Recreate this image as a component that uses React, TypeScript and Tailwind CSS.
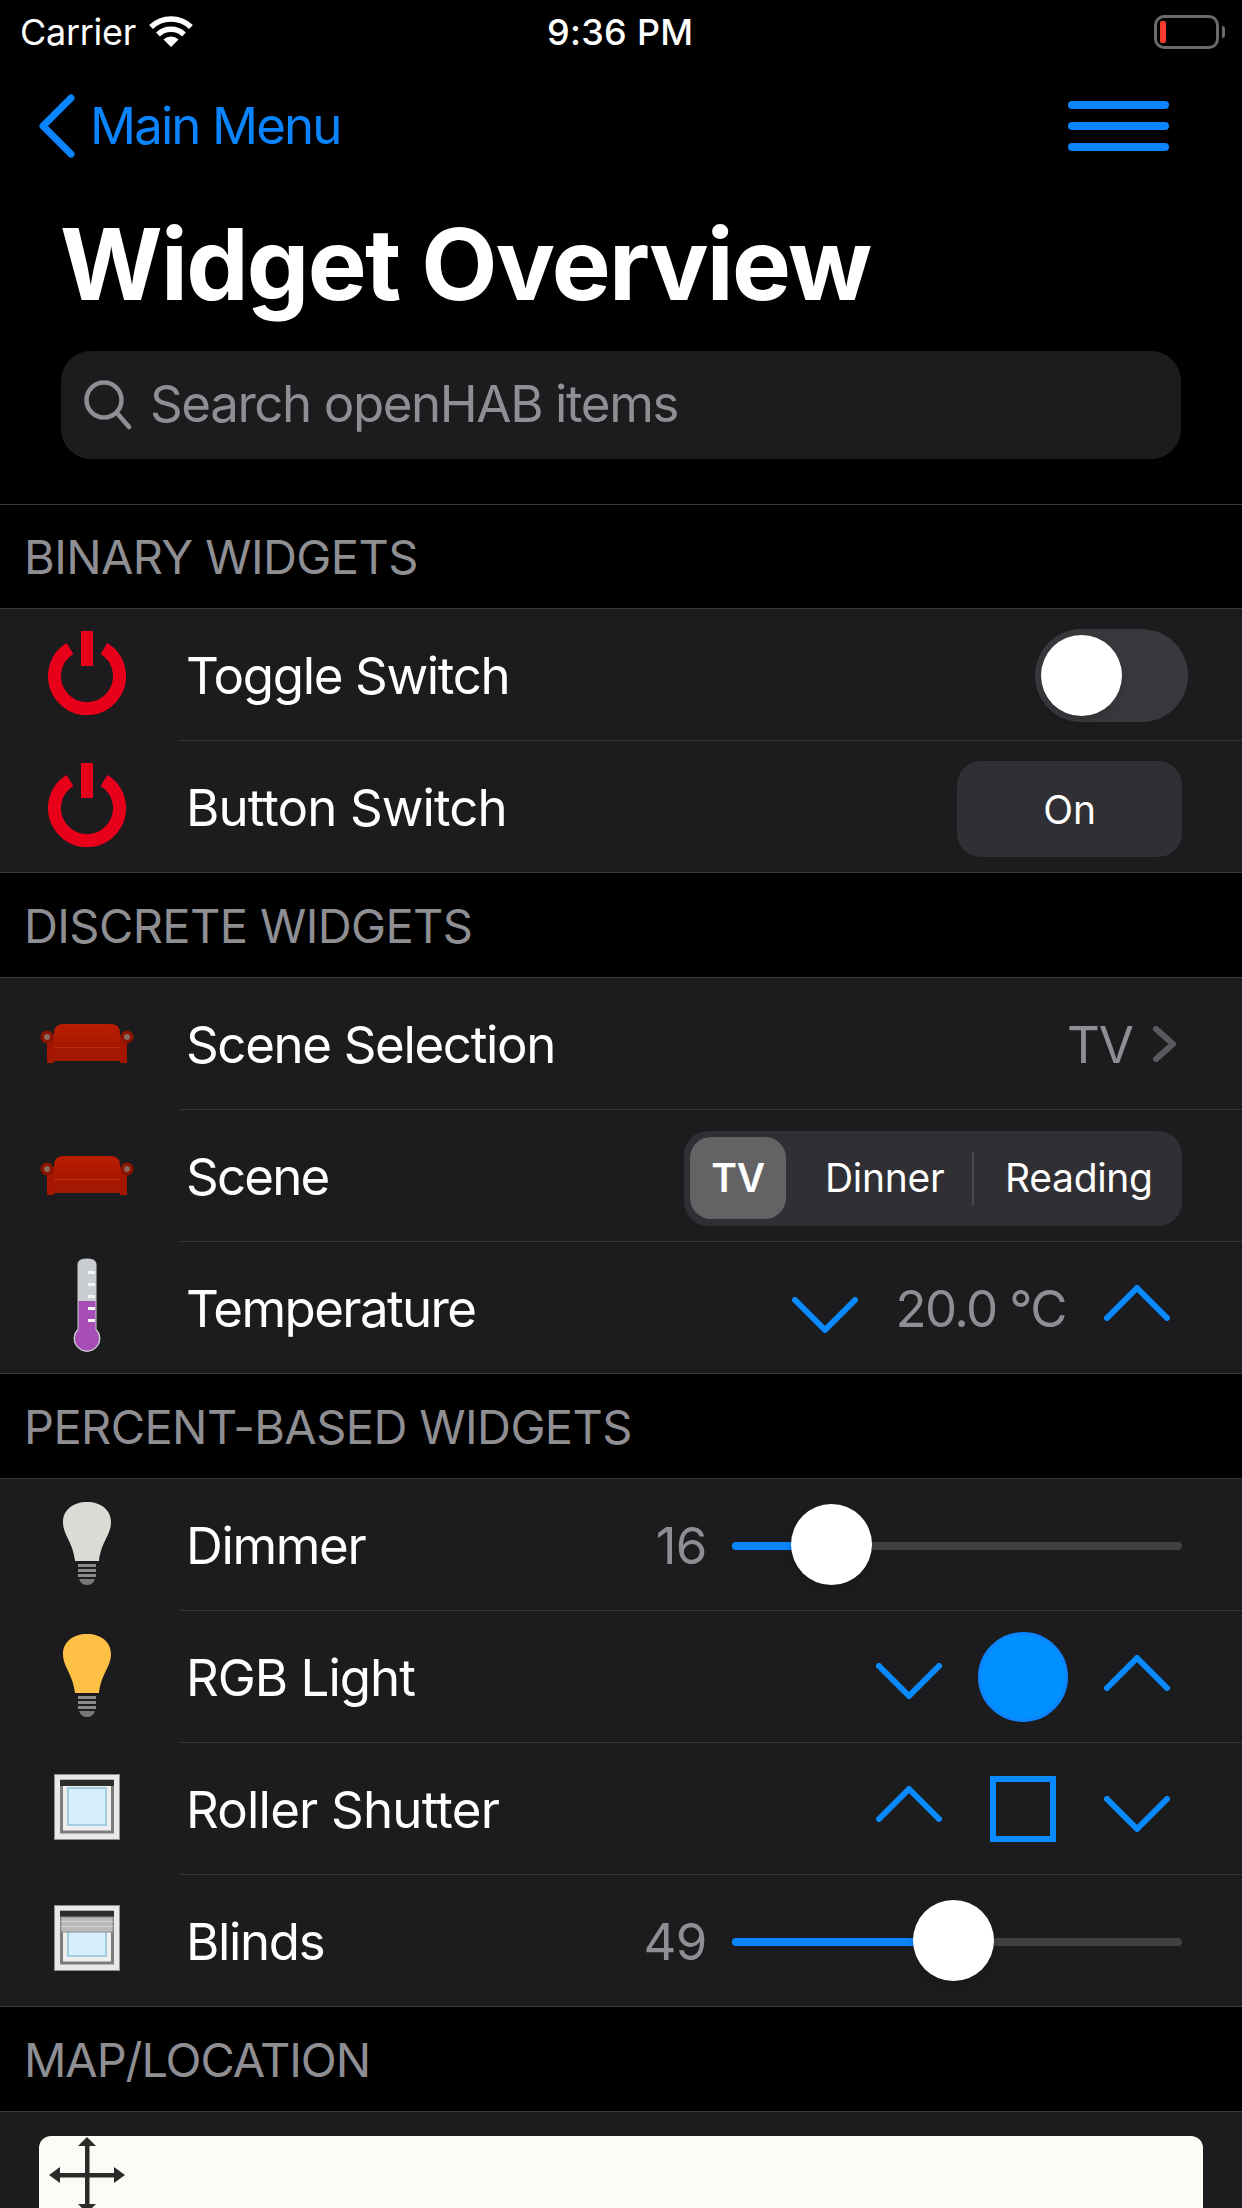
import React from 'react';

function Chevron({ up, className }: { up?: boolean; className?: string }) {
  return (
    <svg viewBox="0 0 66 36" className={`w-[66px] h-[36px] shrink-0 ${className ?? ''}`} fill="none" stroke="#0a8aff" strokeWidth="6" strokeLinecap="round" strokeLinejoin="round">
      <polyline points={up ? '3,33 33,3 63,33' : '3,3 33,33 63,3'} />
    </svg>
  );
}

function PowerIcon() {
  return (
    <svg viewBox="0 0 78 84" className="w-[78px] h-[84px] mb-[4px]" fill="none">
      <path d="M22 17.5 A32.5 32.5 0 1 0 56 17.5" stroke="#e8001a" strokeWidth="13" />
      <rect x="33" y="0" width="12" height="35" fill="#e8001a" />
    </svg>
  );
}

function SofaIcon({ id }: { id: string }) {
  return (
    <svg viewBox="0 0 94 40" className="w-[94px] h-[40px] mb-[2px]">
      <defs>
        <linearGradient id={id} x1="0" y1="0" x2="0" y2="1">
          <stop offset="0" stopColor="#bb1d00" />
          <stop offset="1" stopColor="#961400" />
        </linearGradient>
      </defs>
      <path d="M7 12 H14 V40 H7 Z" fill="#a51600" />
      <path d="M80 12 H87 V40 H80 Z" fill="#a51600" />
      <path d="M14 10 Q14 1 24 1 H70 Q80 1 80 10 V38 H14 Z" fill={`url(#${id})`} />
      <rect x="14" y="24" width="66" height="14" fill="#a31800" />
      <rect x="14" y="24" width="66" height="1" fill="#c42a08" />
      <circle cx="7" cy="14" r="6.5" fill="#8a1400" />
      <circle cx="7" cy="14" r="3" fill="#8a6a5c" />
      <circle cx="87" cy="14" r="6.5" fill="#8a1400" />
      <circle cx="87" cy="14" r="3" fill="#8a6a5c" />
    </svg>
  );
}

function ThermometerIcon() {
  return (
    <svg viewBox="0 0 28 96" className="w-[28px] h-[96px] mb-[4px]">
      <path d="M5 6 Q5 1 14 1 Q23 1 23 6 V71 A13 13 0 1 1 5 71 Z" fill="#c9cdcf" stroke="#c9cdcf" strokeWidth="1" />
      <path d="M5.5 43 H22.5 V72 A12 12 0 1 1 5.5 72 Z" fill="#a64db6" />
      <rect x="15" y="13" width="7" height="3" fill="#f4f4f4" />
      <rect x="15" y="25" width="7" height="3" fill="#f4f4f4" />
      <rect x="15" y="37" width="7" height="3" fill="#f4f4f4" />
      <rect x="15" y="49" width="7" height="3" fill="#f4f4f4" />
      <rect x="15" y="61" width="7" height="3" fill="#f4f4f4" />
    </svg>
  );
}

function BulbIcon({ color }: { color: string }) {
  return (
    <svg viewBox="0 0 48 84" className="w-[48px] h-[84px] mb-[3px]">
      <path d="M24 0 C38 0 48 8 48 20 C48 33 38 40 36 59 H12 C10 40 0 33 0 20 C0 8 10 0 24 0 Z" fill={color} />
      <rect x="15" y="62" width="18" height="3" fill="#8a8a8a" />
      <rect x="15" y="67" width="18" height="3" fill="#8a8a8a" />
      <rect x="15" y="72" width="18" height="3" fill="#8a8a8a" />
      <path d="M16 77 H32 Q30 83 24 83 Q18 83 16 77 Z" fill="#777" />
    </svg>
  );
}

function WindowIcon({ blinds }: { blinds?: boolean }) {
  return (
    <svg viewBox="0 0 66 66" className="w-[66px] h-[66px] mb-[5px]">
      <rect x="0.5" y="0.5" width="65" height="65" fill="#e9e9e9" stroke="#8f8f8f" />
      <rect x="7.5" y="7" width="51" height="51" fill="#eeeeee" stroke="#7c7c7c" strokeWidth="3" />
      <rect x="14" y="14" width="38" height="37" fill="#d7eefc" stroke="#8fc1de" strokeWidth="1.5" />
      <rect x="6" y="6" width="54" height="6" fill="#2b2b2b" />
      {blinds && (
        <g>
          <rect x="7" y="12" width="52" height="15" fill="#b9b9b9" stroke="#8c8c8c" />
          <rect x="7" y="16" width="52" height="1" fill="#d4d4d4" />
          <rect x="7" y="21" width="52" height="1" fill="#d4d4d4" />
        </g>
      )}
    </svg>
  );
}

function WifiIcon() {
  return (
    <svg viewBox="0 0 46 32" className="w-[46px] h-[32px] ml-[12px]" fill="none" stroke="#fff" strokeWidth="5.5">
      <path d="M3 11 A29 29 0 0 1 43 11" />
      <path d="M10 18.5 A19 19 0 0 1 36 18.5" />
      <path d="M23 31 L15.5 23.5 A11 11 0 0 1 30.5 23.5 Z" fill="#fff" stroke="none" />
    </svg>
  );
}

function MoveIcon() {
  return (
    <svg viewBox="0 0 76 76" className="w-[76px] h-[76px] ml-[10px] mt-px" fill="#2b2b2b">
      <rect x="36" y="8" width="4.5" height="60" />
      <rect x="8" y="36" width="60" height="4.5" />
      <polygon points="38,0 47,9 29,9" />
      <polygon points="38,76 47,67 29,67" />
      <polygon points="0,38 11,30 11,46" />
      <polygon points="76,38 65,30 65,46" />
    </svg>
  );
}

function SectionHeader({ title, className }: { title: string; className?: string }) {
  return (
    <div className={`h-[105px] flex items-center pl-[24px] pt-[2px] first:border-t border-b border-[#38383a] text-[47px] text-[#8e8e93] bg-black ${className ?? 'tracking-[-0.6px]'}`}>
      {title}
    </div>
  );
}

function Row({ icon, label, last, labelClass, children }: { icon: React.ReactNode; label: string; last?: boolean; labelClass?: string; children?: React.ReactNode }) {
  return (
    <div className={`h-[132px] flex bg-[#1c1c1e] ${last ? 'border-b border-[#38383a]' : ''}`}>
      <div className="w-[180px] shrink-0 flex items-center pl-[40px]">
        <div className="w-[94px] flex justify-center">{icon}</div>
      </div>
      <div className={`flex-1 flex items-center justify-between ${last ? '' : 'border-b border-[#38383a]'}`}>
        <span className={`pl-[6px] pt-[4px] text-[51px] text-white ${labelClass ?? 'tracking-[-1.35px]'}`}>{label}</span>
        {children}
      </div>
    </div>
  );
}

function Slider({ value }: { value: number }) {
  const knobLeft = (369 * value) / 100;
  return (
    <div className="flex items-center pr-[60px] pt-[2px]">
      <span className="pt-[2px] text-[51px] text-[#8e8e93] w-[70px] text-right tracking-[-0.5px]">{value}</span>
      <div className="relative ml-[25px] w-[450px] h-[8px] rounded-full bg-[#404043]">
        <div className="h-full rounded-full bg-[#0a84ff]" style={{ width: knobLeft + 40 }} />
        <div className="absolute top-[-38px] w-[81px] h-[81px] rounded-full bg-white shadow-[0_3px_8px_rgba(0,0,0,0.15)]" style={{ left: knobLeft }} />
      </div>
    </div>
  );
}

export default function App() {
  return (
    <div className="w-[1242px] h-[2208px] overflow-hidden bg-black text-white font-['Inter',sans-serif]">
      {/* status bar */}
      <div className="h-[64px] flex items-center justify-between relative">
        <div className="flex items-center pl-[20px] text-[36px] tracking-[-0.3px]">
          Carrier
          <WifiIcon />
        </div>
        <div className="absolute left-[547px] top-[10px] text-[36px] font-medium leading-[44px] tracking-[0.3px]">9:36 PM</div>
        <div className="flex items-center pr-[17px]">
          <div className="w-[65px] h-[34px] rounded-[10px] border-[3px] border-[#6a6a6a] p-[3px]">
            <div className="w-[6px] h-full rounded-[2px] bg-[#ff3b30]" />
          </div>
          <div className="w-[3px] h-[12px] ml-[3px] rounded-r-full bg-[#6a6a6a]" />
        </div>
      </div>

      {/* nav */}
      <div className="h-[124px] flex items-center justify-between">
        <div className="flex items-center pl-[39px]">
          <svg viewBox="0 0 36 64" className="w-[36px] h-[64px]" fill="none" stroke="#0a84ff" strokeWidth="7" strokeLinecap="round" strokeLinejoin="round">
            <polyline points="32,4 4,32 32,60" />
          </svg>
          <span className="ml-[15px] text-[51px] text-[#0a84ff] tracking-[-1.9px]">Main Menu</span>
        </div>
        <div className="flex flex-col gap-[13px] pr-[73px]">
          <div className="w-[101px] h-[8px] rounded-full bg-[#0a84ff]" />
          <div className="w-[101px] h-[8px] rounded-full bg-[#0a84ff]" />
          <div className="w-[101px] h-[8px] rounded-full bg-[#0a84ff]" />
        </div>
      </div>

      {/* title */}
      <div className="mt-[16px] h-[120px] pl-[60px] flex items-center text-[99px] font-bold tracking-[-1.7px]">Widget Overview</div>

      {/* search */}
      <div className="mt-[27px] mx-[61px] h-[108px] rounded-[30px] bg-[#1c1c1e] flex items-center pl-[23px]">
        <svg viewBox="0 0 48 50" className="w-[48px] h-[50px]" fill="none" stroke="#8e8e93" strokeWidth="4.5" strokeLinecap="round">
          <circle cx="20" cy="20" r="17.5" />
          <line x1="33" y1="33" x2="45" y2="47" />
        </svg>
        <span className="ml-[18px] mb-[2px] text-[51px] text-[#8e8e93] tracking-[-1.4px]">Search openHAB items</span>
      </div>

      <div className="mt-[45px]">
        <SectionHeader title="BINARY WIDGETS" />
        <div>
          <Row icon={<PowerIcon />} label="Toggle Switch">
            <div className="mr-[54px] mt-[2px] w-[153px] h-[93px] rounded-full bg-[#39393d] flex items-center pl-[6px]">
              <div className="w-[81px] h-[81px] rounded-full bg-white shadow-[0_3px_8px_rgba(0,0,0,0.15)]" />
            </div>
          </Row>
          <Row icon={<PowerIcon />} label="Button Switch" labelClass="tracking-[-0.9px]" last>
            <div className="mr-[60px] mt-[4px] pt-[4px] w-[225px] h-[96px] rounded-[24px] bg-[#303034] flex items-center justify-center text-[39px] tracking-[-0.3px]">On</div>
          </Row>
        </div>

        <SectionHeader title="DISCRETE WIDGETS" />
        <div>
          <Row icon={<SofaIcon id="sofa-a" />} label="Scene Selection">
            <div className="flex items-center pr-[65px]">
              <span className="pt-[4px] text-[51px] text-[#8e8e93] tracking-[-1px]">TV</span>
              <svg viewBox="0 0 24 36" className="w-[24px] h-[36px] ml-[20px]" fill="none" stroke="#5a5a5e" strokeWidth="6" strokeLinecap="round" strokeLinejoin="round">
                <polyline points="3,3 20,18 3,33" />
              </svg>
            </div>
          </Row>
          <Row icon={<SofaIcon id="sofa-b" />} label="Scene" labelClass="tracking-[-1.8px]">
            <div className="mr-[60px] mt-[5px] w-[498px] h-[95px] rounded-[24px] bg-[#303034] flex items-center pl-[6px] text-[39px] tracking-[-0.3px]">
              <div className="w-[96px] h-[82px] rounded-[21px] bg-[#636366] flex items-center justify-center font-semibold">TV</div>
              <span className="ml-[39px] w-[147px] pt-[1px]">Dinner</span>
              <div className="w-[2px] h-[53px] bg-[#4a4a4d]" />
              <span className="ml-[31px] pt-[1px]">Reading</span>
            </div>
          </Row>
          <Row icon={<ThermometerIcon />} label="Temperature" labelClass="tracking-[-1.6px]" last>
            <div className="flex items-center gap-[38px] pr-[72px]">
              <Chevron className="mt-[14px] -mr-px" />
              <span className="pt-[4px] text-[51px] text-[#8e8e93] tracking-[-1.6px]">20.0 °C</span>
              <Chevron up className="mb-[10px]" />
            </div>
          </Row>
        </div>

        <SectionHeader title="PERCENT-BASED WIDGETS" />
        <div>
          <Row icon={<BulbIcon color="#dcdcd6" />} label="Dimmer">
            <Slider value={16} />
          </Row>
          <Row icon={<BulbIcon color="#ffc145" />} label="RGB Light" labelClass="tracking-[-1px]">
            <div className="flex items-center gap-[36px] pr-[72px]">
              <Chevron className="mt-[8px]" />
              <div className="w-[90px] h-[90px] rounded-full bg-[#0091ff] border-[3px] border-[#0a84ff]" />
              <Chevron up className="mb-[8px]" />
            </div>
          </Row>
          <Row icon={<WindowIcon />} label="Roller Shutter" labelClass="tracking-[-0.8px]">
            <div className="flex items-center gap-[48px] pr-[72px]">
              <Chevron up className="mb-[10px]" />
              <div className="w-[66px] h-[66px] border-[6px] border-[#0a8aff]" />
              <Chevron className="mt-[10px]" />
            </div>
          </Row>
          <Row icon={<WindowIcon blinds />} label="Blinds" last>
            <Slider value={49} />
          </Row>
        </div>

        <SectionHeader title="MAP/LOCATION" className="tracking-[-1.1px]" />
        <div className="bg-[#1c1c1e] pt-[24px] px-[39px] h-[200px]">
          <div className="h-[200px] rounded-t-[12px] bg-[#fdfbf6] overflow-hidden">
            <MoveIcon />
          </div>
        </div>
      </div>
    </div>
  );
}
